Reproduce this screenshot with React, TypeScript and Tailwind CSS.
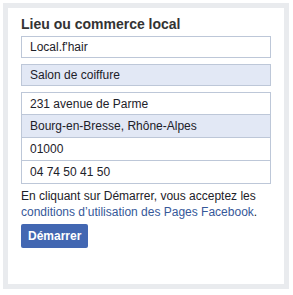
const font = { fontFamily: '"Liberation Sans", Arial, sans-serif' };

const Field = ({ value, shaded, className = '' }: { value: string; shaded?: boolean; className?: string }) => (
  <div
    className={`h-[22px] pl-[8px] flex items-center text-[12px] text-[#1d2129] ${shaded ? 'bg-[#e2e8f5]' : 'bg-white'} ${className}`}
  >
    {value}
  </div>
);

export default function App() {
  return (
    <div className="w-[293px] h-[295px] bg-white pt-[3px] pl-[3px]" style={font}>
      <div className="w-[286px] h-[286px] border-[5px] border-[#e9ebee] bg-white pl-[13px] pr-[13px] pt-[7px]">
        <h2 className="text-[14px] leading-[18px] font-bold text-[#333] mb-[3px]">Lieu ou commerce local</h2>
        <div className="flex flex-col gap-[6px] w-[250px]">
          <Field value="Local.f'hair" className="border border-[#bdc7d8]" />
          <Field value="Salon de coiffure" shaded className="border border-[#bdc7d8]" />
          <div className="border border-[#bdc7d8] flex flex-col divide-y divide-[#bdc7d8]">
            <Field value="231 avenue de Parme" />
            <Field value="Bourg-en-Bresse, Rhône-Alpes" shaded className="h-[23px]" />
            <Field value="01000" className="h-[23px]" />
            <Field value="04 74 50 41 50" />
          </div>
        </div>
        <p className="mt-[4px] text-[12px] leading-[16px] text-[#1d2129]">
          En cliquant sur Démarrer, vous acceptez les{' '}
          <a href="#" className="text-[#365899]">conditions d’utilisation des Pages Facebook</a>.
        </p>
        <button className="mt-[4px] h-[24px] px-[7px] rounded-[2px] bg-[#4267b2] text-white text-[12px] font-bold">
          Démarrer
        </button>
      </div>
    </div>
  );
}
